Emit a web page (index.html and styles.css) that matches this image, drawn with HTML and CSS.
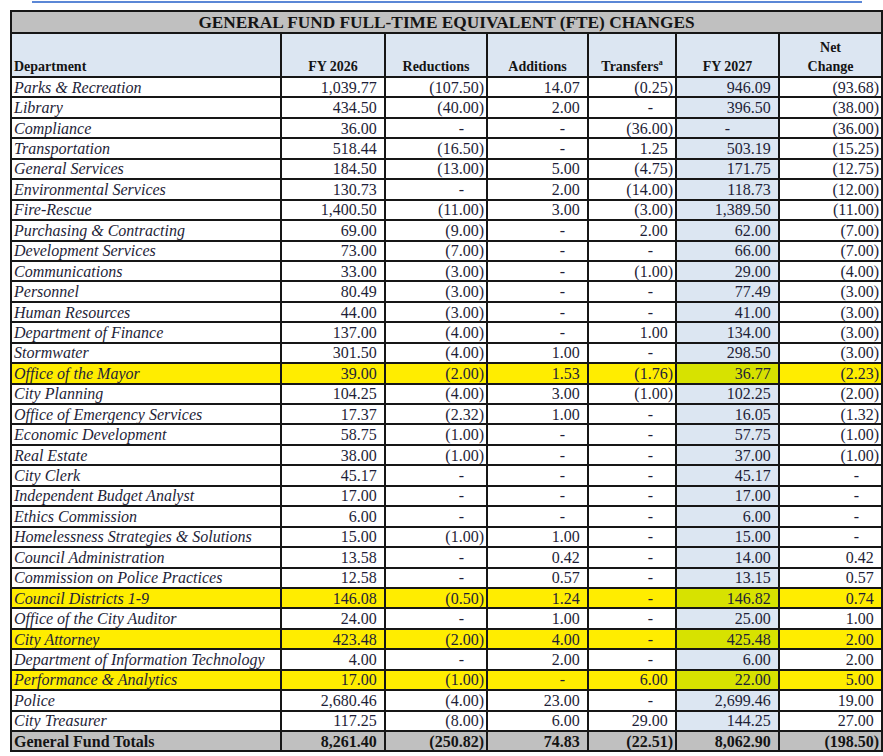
FILE: index.html
```html
<!DOCTYPE html>
<html>

<head>
  <link rel="stylesheet" href="styles.css">
</head>

<body>
  <div class="page">
    <div class="top-rule"></div>

    <table class="fte">
      <colgroup>
        <col class="col-dept">
        <col class="col-fy26">
        <col class="col-red">
        <col class="col-add">
        <col class="col-tr">
        <col class="col-fy27">
        <col class="col-net">
      </colgroup>
      <thead>
        <tr class="title-row">
          <th colspan="7">GENERAL FUND FULL-TIME EQUIVALENT (FTE) CHANGES</th>
        </tr>
        <tr class="head-row">
          <th class="dept">Department</th>
          <th>FY 2026</th>
          <th>Reductions</th>
          <th>Additions</th>
          <th>Transfers<sup>a</sup></th>
          <th>FY 2027</th>
          <th>Net<br>Change</th>
        </tr>
      </thead>
      <tbody>
        <tr>
          <td class="dept">Parks &amp; Recreation</td>
          <td class="p">1,039.77</td><td class="n">(107.50)</td><td class="p">14.07</td><td class="n">(0.25)</td><td class="p fy">946.09</td><td class="n">(93.68)</td>
        </tr>
        <tr>
          <td class="dept">Library</td>
          <td class="p">434.50</td><td class="n">(40.00)</td><td class="p">2.00</td><td class="d">-</td><td class="p fy">396.50</td><td class="n">(38.00)</td>
        </tr>
        <tr>
          <td class="dept">Compliance</td>
          <td class="p">36.00</td><td class="d">-</td><td class="d">-</td><td class="n">(36.00)</td><td class="c fy">-</td><td class="n">(36.00)</td>
        </tr>
        <tr>
          <td class="dept">Transportation</td>
          <td class="p">518.44</td><td class="n">(16.50)</td><td class="d">-</td><td class="p">1.25</td><td class="p fy">503.19</td><td class="n">(15.25)</td>
        </tr>
        <tr>
          <td class="dept">General Services</td>
          <td class="p">184.50</td><td class="n">(13.00)</td><td class="p">5.00</td><td class="n">(4.75)</td><td class="p fy">171.75</td><td class="n">(12.75)</td>
        </tr>
        <tr>
          <td class="dept">Environmental Services</td>
          <td class="p">130.73</td><td class="d">-</td><td class="p">2.00</td><td class="n">(14.00)</td><td class="p fy">118.73</td><td class="n">(12.00)</td>
        </tr>
        <tr>
          <td class="dept">Fire-Rescue</td>
          <td class="p">1,400.50</td><td class="n">(11.00)</td><td class="p">3.00</td><td class="n">(3.00)</td><td class="p fy">1,389.50</td><td class="n">(11.00)</td>
        </tr>
        <tr>
          <td class="dept">Purchasing &amp; Contracting</td>
          <td class="p">69.00</td><td class="n">(9.00)</td><td class="d">-</td><td class="p">2.00</td><td class="p fy">62.00</td><td class="n">(7.00)</td>
        </tr>
        <tr>
          <td class="dept">Development Services</td>
          <td class="p">73.00</td><td class="n">(7.00)</td><td class="d">-</td><td class="d">-</td><td class="p fy">66.00</td><td class="n">(7.00)</td>
        </tr>
        <tr>
          <td class="dept">Communications</td>
          <td class="p">33.00</td><td class="n">(3.00)</td><td class="d">-</td><td class="n">(1.00)</td><td class="p fy">29.00</td><td class="n">(4.00)</td>
        </tr>
        <tr>
          <td class="dept">Personnel</td>
          <td class="p">80.49</td><td class="n">(3.00)</td><td class="d">-</td><td class="d">-</td><td class="p fy">77.49</td><td class="n">(3.00)</td>
        </tr>
        <tr>
          <td class="dept">Human Resources</td>
          <td class="p">44.00</td><td class="n">(3.00)</td><td class="d">-</td><td class="d">-</td><td class="p fy">41.00</td><td class="n">(3.00)</td>
        </tr>
        <tr>
          <td class="dept">Department of Finance</td>
          <td class="p">137.00</td><td class="n">(4.00)</td><td class="d">-</td><td class="p">1.00</td><td class="p fy">134.00</td><td class="n">(3.00)</td>
        </tr>
        <tr>
          <td class="dept">Stormwater</td>
          <td class="p">301.50</td><td class="n">(4.00)</td><td class="p">1.00</td><td class="d">-</td><td class="p fy">298.50</td><td class="n">(3.00)</td>
        </tr>
        <tr class="marked">
          <td class="dept">Office of the Mayor</td>
          <td class="p">39.00</td><td class="n">(2.00)</td><td class="p">1.53</td><td class="n">(1.76)</td><td class="p fy">36.77</td><td class="n">(2.23)</td>
        </tr>
        <tr>
          <td class="dept">City Planning</td>
          <td class="p">104.25</td><td class="n">(4.00)</td><td class="p">3.00</td><td class="n">(1.00)</td><td class="p fy">102.25</td><td class="n">(2.00)</td>
        </tr>
        <tr>
          <td class="dept">Office of Emergency Services</td>
          <td class="p">17.37</td><td class="n">(2.32)</td><td class="p">1.00</td><td class="d">-</td><td class="p fy">16.05</td><td class="n">(1.32)</td>
        </tr>
        <tr>
          <td class="dept">Economic Development</td>
          <td class="p">58.75</td><td class="n">(1.00)</td><td class="d">-</td><td class="d">-</td><td class="p fy">57.75</td><td class="n">(1.00)</td>
        </tr>
        <tr>
          <td class="dept">Real Estate</td>
          <td class="p">38.00</td><td class="n">(1.00)</td><td class="d">-</td><td class="d">-</td><td class="p fy">37.00</td><td class="n">(1.00)</td>
        </tr>
        <tr>
          <td class="dept">City Clerk</td>
          <td class="p">45.17</td><td class="d">-</td><td class="d">-</td><td class="d">-</td><td class="p fy">45.17</td><td class="d">-</td>
        </tr>
        <tr>
          <td class="dept">Independent Budget Analyst</td>
          <td class="p">17.00</td><td class="d">-</td><td class="d">-</td><td class="d">-</td><td class="p fy">17.00</td><td class="d">-</td>
        </tr>
        <tr>
          <td class="dept">Ethics Commission</td>
          <td class="p">6.00</td><td class="d">-</td><td class="d">-</td><td class="d">-</td><td class="p fy">6.00</td><td class="d">-</td>
        </tr>
        <tr>
          <td class="dept">Homelessness Strategies &amp; Solutions</td>
          <td class="p">15.00</td><td class="n">(1.00)</td><td class="p">1.00</td><td class="d">-</td><td class="p fy">15.00</td><td class="d">-</td>
        </tr>
        <tr>
          <td class="dept">Council Administration</td>
          <td class="p">13.58</td><td class="d">-</td><td class="p">0.42</td><td class="d">-</td><td class="p fy">14.00</td><td class="p">0.42</td>
        </tr>
        <tr>
          <td class="dept">Commission on Police Practices</td>
          <td class="p">12.58</td><td class="d">-</td><td class="p">0.57</td><td class="d">-</td><td class="p fy">13.15</td><td class="p">0.57</td>
        </tr>
        <tr class="marked spill-sm">
          <td class="dept">Council Districts 1-9</td>
          <td class="p">146.08</td><td class="n">(0.50)</td><td class="p">1.24</td><td class="d">-</td><td class="p fy">146.82</td><td class="p">0.74</td>
        </tr>
        <tr>
          <td class="dept">Office of the City Auditor</td>
          <td class="p">24.00</td><td class="d">-</td><td class="p">1.00</td><td class="d">-</td><td class="p fy">25.00</td><td class="p">1.00</td>
        </tr>
        <tr class="marked spill-lg">
          <td class="dept">City Attorney</td>
          <td class="p">423.48</td><td class="n">(2.00)</td><td class="p">4.00</td><td class="d">-</td><td class="p fy">425.48</td><td class="p">2.00</td>
        </tr>
        <tr>
          <td class="dept">Department of Information Technology</td>
          <td class="p">4.00</td><td class="d">-</td><td class="p">2.00</td><td class="d">-</td><td class="p fy">6.00</td><td class="p">2.00</td>
        </tr>
        <tr class="marked">
          <td class="dept">Performance &amp; Analytics</td>
          <td class="p">17.00</td><td class="n">(1.00)</td><td class="d">-</td><td class="p">6.00</td><td class="p fy">22.00</td><td class="p">5.00</td>
        </tr>
        <tr>
          <td class="dept">Police</td>
          <td class="p">2,680.46</td><td class="n">(4.00)</td><td class="p">23.00</td><td class="d">-</td><td class="p fy">2,699.46</td><td class="p">19.00</td>
        </tr>
        <tr>
          <td class="dept">City Treasurer</td>
          <td class="p">117.25</td><td class="n">(8.00)</td><td class="p">6.00</td><td class="p">29.00</td><td class="p fy">144.25</td><td class="p">27.00</td>
        </tr>
      </tbody>
      <tfoot>
        <tr class="total-row">
          <td class="dept">General Fund Totals</td>
          <td class="p">8,261.40</td><td class="n">(250.82)</td><td class="p">74.83</td><td class="n">(22.51)</td><td class="p">8,062.90</td><td class="n">(198.50)</td>
        </tr>
      </tfoot>
    </table>

    <div class="note">Note: Table may not add due to rounding.</div>
  </div>
</body>

</html>
```

FILE: styles.css
```css
:root {
  --ink: #1e1e38;
  --head-ink: #141414;
  --rule: #161616;
  --title-bg: #c0c0c0;
  --head-bg: #dce6f2;
  --fy-bg: #dce6f2;
  --mark: #ffed00;
  --mark-fy: #d7e200;
  --top-rule: #5b87d6;
}

body {
  margin: 0;
  padding: 0;
  background-color: #fff;
  color: var(--ink);
  font-family: 'Liberation Serif', 'Times New Roman', serif;
}

.page {
  padding: 1px 0 0 10px;
}

/* leftover rule from the page header above the table */
.top-rule {
  width: 830px;
  margin-left: 22px;
  border-top: 2px solid var(--top-rule);
  margin-bottom: 7px;
}

.fte {
  border-collapse: collapse;
  table-layout: fixed;
  width: 871px;
  font-size: 16px;
}

.col-dept { width: 270px; }
.col-fy26 { width: 104px; }
.col-red { width: 102px; }
.col-add { width: 101px; }
.col-tr { width: 88px; }
.col-fy27 { width: 103px; }
.col-net { width: 103px; }

.fte th,
.fte td {
  border: 2px solid var(--rule);
  padding: 0 2px 0 2px;
  line-height: 17px;
  white-space: nowrap;
  overflow: hidden;
}

.title-row th {
  height: 20px;
  background-color: var(--title-bg);
  color: var(--head-ink);
  font-size: 17.3px;
  text-align: center;
  vertical-align: middle;
}

.head-row th {
  height: 42px;
  background-color: var(--head-bg);
  color: var(--head-ink);
  font-size: 14px;
  line-height: 19px;
  vertical-align: bottom;
  text-align: center;
}

.head-row th.dept {
  text-align: left;
}

.head-row sup {
  font-size: 8px;
  line-height: 0;
  vertical-align: 6px;
}

tbody td {
  height: 18.45px;
}

td.dept {
  font-style: italic;
  text-align: left;
  padding-left: 2px;
}

/* accounting style: positives leave room for the closing paren */
td.p,
td.n {
  text-align: right;
}

td.p::after {
  content: ')';
  visibility: hidden;
}

td.d {
  text-align: right;
  padding-right: 22px;
}

td.c {
  text-align: center;
}

td.fy {
  background-color: var(--fy-bg);
}

tr.marked td {
  background-color: var(--mark);
}

tr.marked td.fy {
  background-color: var(--mark-fy);
}

/* highlighter strokes that ran past the table edge */
tr.spill-sm td.dept {
  box-shadow: -4px 0 0 var(--mark);
}

tr.spill-lg td.dept {
  box-shadow: -8px 0 0 var(--mark);
}

.total-row td {
  height: 18px;
  background-color: var(--title-bg);
  color: var(--head-ink);
  font-weight: bold;
}

.total-row td.dept {
  font-style: normal;
}

.note {
  padding: 2px 0 0 4px;
  font-size: 15px;
  font-style: italic;
  font-weight: bold;
  color: var(--ink);
}
```
